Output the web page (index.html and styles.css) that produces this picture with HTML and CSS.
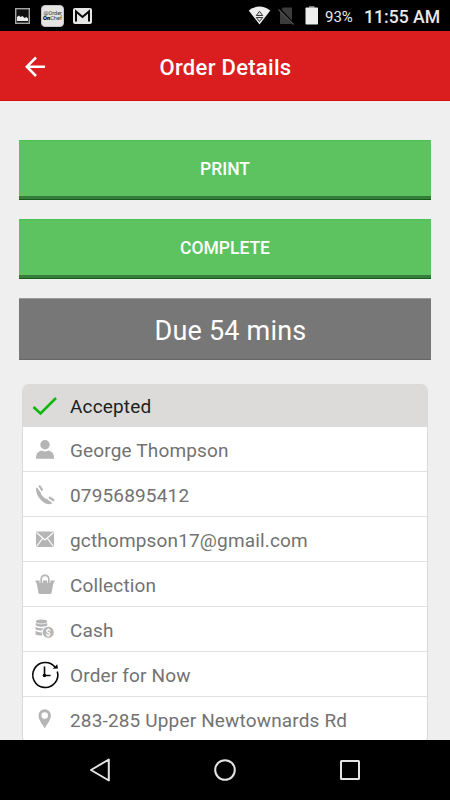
FILE: index.html
```html
<!DOCTYPE html>
<html lang="en">
<head>
<meta charset="utf-8">
<title>Order Details</title>
<link rel="stylesheet" href="styles.css">
</head>
<body>
<div class="screen">
  <div class="status">
    <svg class="status-left" width="100" height="31" viewBox="0 0 100 31">
      <rect x="15.700" y="8.700" width="13.600" height="14.600" fill="#111" stroke="#a5a5a5" stroke-width="1.400"/>
      <path d="M17 21v-4l2-1.500 1.500 1.500 2-1 2 2 2-1 1.500 1.500V21z" fill="#eee"/>
      <rect x="41.500" y="5.500" width="22" height="21" rx="3.500" fill="#e4e4e4" stroke="#c4c4c4"/>
      <text class="logo" x="43.500" y="15.300" textLength="18.500" lengthAdjust="spacingAndGlyphs">@Order</text>
      <text class="logo" x="43" y="20" textLength="19" lengthAdjust="spacingAndGlyphs"><tspan class="logo-bold">On</tspan>Chef</text>
      <rect x="73" y="8" width="19" height="16" rx="2" fill="#e6e6e6"/>
      <path d="M76 21.500V11.500l6.500 5.500 6.500-5.500v10" fill="none" stroke="#080808" stroke-width="2"/>
    </svg>
    <svg class="status-right" width="72" height="31" viewBox="248 0 72 31">
      <path d="M248.700 10.500Q259.500 2.700 270.300 10.500L259.500 24.500z" fill="#eee"/>
      <path d="M256.300 15.500l3.200-4.200 3.200 4.200zM256.300 17.500h6.400l-3.200 4z" fill="#ddd" stroke="#222" stroke-width=".9"/>
      <path d="M283 7.500h9V24h-12V11z" fill="#3c3c3c"/>
      <path d="M279 8.500l14.500 15.500" stroke="#000" stroke-width="2.500"/>
      <path d="M278.500 9.500L293.500 24.500" stroke="#555" stroke-width="1.200"/>
      <path d="M309 6h5.500v2h-5.500z" fill="#777"/>
      <rect x="305.500" y="7.500" width="12.500" height="17" rx=".8" fill="#eee"/>
    </svg>
    <span class="battery">93%</span>
    <span class="clock">11:55 AM</span>
  </div>
  <header class="header">
    <svg class="back" width="22" height="22" viewBox="25 56 22 22"><path d="M45 66.700H27M36 57.500L26.800 66.700 36 76" fill="none" stroke="#fff" stroke-width="2.500"/></svg>
    <h1>Order Details</h1>
  </header>
  <main class="content">
    <button class="btn">PRINT</button>
    <button class="btn">COMPLETE</button>
    <div class="due"><span>Due 54 mins</span></div>
    <div class="card">
      <div class="row row-head">
        <svg class="icon" viewBox="23 384 44 44"><path d="M33.500 407L40.500 413.500 56 398" fill="none" stroke="#0cb80c" stroke-width="2.600"/></svg>
        <span>Accepted</span>
      </div>
      <div class="row">
        <svg class="icon" viewBox="23 427 44 44"><circle cx="45" cy="444.800" r="4.700"/><path d="M36 458.700c0-5 2-7.200 5.500-8.200q3.500 2 7 0c3.500 1 5.700 3.200 5.700 8.200z"/></svg>
        <span>George Thompson</span>
      </div>
      <div class="row">
        <svg class="icon" viewBox="23 472 44 44"><path d="M36.100 488l1-.6 3.700 5.300c.2 2.200 3.700 6 6.200 6.400l5.500 4.200q-2.200 1.200-4.500.8c-6.500-1-12.700-9.600-11.900-16.100z"/><path d="M38.300 486l1.700-1 3.300 4.700-1.700 1.500zM48.300 498l1.500-1.700 4.900 3.300-1.300 2.100z"/></svg>
        <span>07956895412</span>
      </div>
      <div class="row">
        <svg class="icon" viewBox="23 517 44 44"><rect x="36" y="531.500" width="18" height="15.500" rx="1"/><path d="M36.500 532.500l8.500 7.500 8.500-7.500M36.500 546.500l6.300-8.300M53.500 546.500l-6.300-8.300" fill="none" stroke="#fff" stroke-width="1.100"/></svg>
        <span>gcthompson17@gmail.com</span>
      </div>
      <div class="row">
        <svg class="icon" viewBox="23 562 44 44"><path d="M35 580.500h20l-1.700 3-1.800 9.500q-.2 1-1.500 1H40q-1.300 0-1.500-1l-1.800-9.500z"/><path d="M41.200 583v-3.500c0-5.500 7.600-5.500 7.600 0v3.500" fill="none" stroke="#fff" stroke-width="3.200"/><path d="M41.200 583.200v-3.700c0-5.500 7.600-5.500 7.600 0v3.700" fill="none" stroke="#b5b5b5" stroke-width="1.700"/></svg>
        <span>Collection</span>
      </div>
      <div class="row">
        <svg class="icon" viewBox="23 607 44 44"><ellipse cx="41.500" cy="621.500" rx="5.800" ry="2"/><path d="M35.700 623q5.800 2.600 11.600 0v2.500q-5.800 2.500-11.600 0zM35.500 627q5.800 2.500 11.500 0v2.500q-5.500 2.200-11.500 0zM35.500 631q5 2.200 9 1v3q-5 1.200-9-.5z"/><circle cx="48.200" cy="632.300" r="6" stroke="#fff"/><text class="coin" x="48.200" y="635.500">$</text></svg>
        <span>Cash</span>
      </div>
      <div class="row">
        <svg class="icon" viewBox="23 652 44 44"><path d="M55.300 667.500A12.500 12.500 0 1 0 57.300 671.500M44.500 666.500v9h6" fill="none" stroke="#080808" stroke-width="1.600"/><path d="M52.800 668.800l5.200-.3-.8-4.200z" fill="#080808"/><circle cx="44.500" cy="675.500" r="1.800" fill="#080808"/></svg>
        <span>Order for Now</span>
      </div>
      <div class="row">
        <svg class="icon" viewBox="23 697 44 44"><path fill-rule="evenodd" d="M44.700 728.500c-1.700-4-6.200-8-6.200-13a6.200 6.200 0 0 1 12.400 0c0 5-4.500 9-6.200 13zM44.700 712.300a3.300 3.300 0 1 0 0 6.600 3.300 3.300 0 0 0 0-6.600z"/></svg>
        <span>283-285 Upper Newtownards Rd</span>
      </div>
    </div>
  </main>
  <nav class="navbar">
    <svg width="24" height="26" viewBox="88 757 24 26"><path d="M108.800 759.500v21L91 770z"/></svg>
    <svg width="24" height="26" viewBox="213 757 24 26"><circle cx="225" cy="770" r="9.800"/></svg>
    <svg width="24" height="26" viewBox="338 757 24 26"><rect x="341" y="761" width="18" height="18" rx=".5"/></svg>
  </nav>
</div>
</body>
</html>
```
FILE: styles.css
```css
* { box-sizing: border-box; }
body { margin: 0; font-family: Roboto, "Liberation Sans", sans-serif; background: #efefef; }
.screen { width: 450px; height: 800px; display: flex; flex-direction: column; overflow: hidden; }
.status { height: 31px; flex: none; background: #000; color: #e8e8e8; display: flex; align-items: center; }
.status-right { margin-left: 148px; }
.logo { font-size: 5.5px; fill: #333; }
.logo-bold { font-weight: 900; fill: #000; }
.battery { margin-left: 5px; width: 39px; font-size: 15px; padding-top: 2px; white-space: nowrap; }
.clock { font-size: 17.6px; font-weight: 500; padding-top: 2px; white-space: nowrap; }
.header { height: 70px; flex: none; background: #da1d1f; border-bottom: 1px solid #d80b0d; display: grid; grid-template-columns: 60px 1fr 60px; align-items: center; padding-top: 2px; }
.back { margin-left: 25px; }
.header h1 { margin: 0; padding: 2px 0 0 1px; color: #fff; font-size: 22px; line-height: 30px; font-weight: 500; letter-spacing: .3px; text-align: center; white-space: nowrap; }
.content { flex: 1; min-height: 0; overflow: hidden; background: #efefef; padding: 39px 19px 0; display: flex; flex-direction: column; }
.btn { flex: none; height: 60px; margin: 0 0 19px; padding: 0 0 3px; border: 0; border-top: 1px solid #48c052; border-bottom: 1px solid #145c1a; box-shadow: inset 0 -3px #347d3a; background: #5dc260; color: #fff; font-family: inherit; font-size: 17.5px; font-weight: 500; }
.due { flex: none; height: 62px; background: #777; border-top: 1px solid #999; border-bottom: 1px solid #666; color: #fff; font-size: 27px; letter-spacing: .2px; display: flex; align-items: center; justify-content: center; padding: 4px 0 0 11px; }
.card { flex: none; margin: 24px 3px 0; border: 1px solid #dadada; border-top: 0; border-radius: 6px; overflow: hidden; background: #fff; }
.row { height: 45px; display: flex; align-items: center; border-bottom: 1.5px solid #e0e0e0; color: #727272; font-size: 19px; letter-spacing: .16px; }
.row span { white-space: nowrap; padding-top: 2px; }
.row-head { height: 43px; background: #dcdbd9; border-bottom: 0; color: #202020; }
.row-head span { padding-top: 1px; }
.icon { flex: none; width: 44px; height: 44px; margin-right: 3px; fill: #b5b5b5; }
.coin { font-size: 9px; font-weight: 700; fill: #fff; text-anchor: middle; }
.navbar { height: 60px; flex: none; background: #000; display: flex; justify-content: space-between; align-items: center; padding: 0 88px; }
.navbar svg { fill: none; stroke: #e4e4e4; stroke-width: 2; stroke-linejoin: round; }
```
